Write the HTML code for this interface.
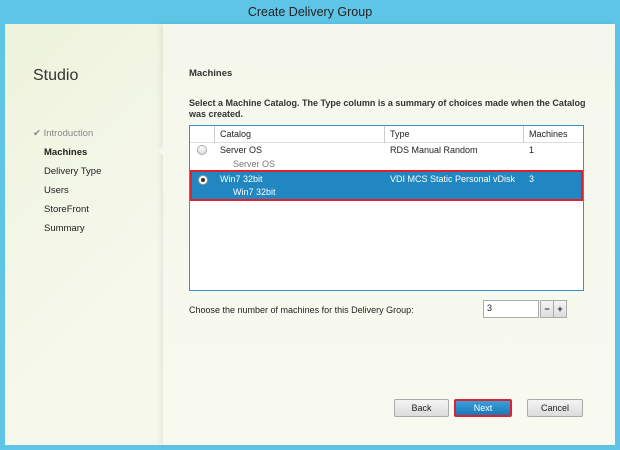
<!DOCTYPE html>
<html><head><style>
*{margin:0;padding:0;box-sizing:border-box}
body{width:620px;height:450px;overflow:hidden;background:#5ec5e6;font-family:"Liberation Sans",sans-serif;font-size:9px;color:#222;position:relative}
.title{position:absolute;left:0;top:0;width:620px;height:24px;text-align:center;line-height:25px;font-size:12.5px;color:#222}
.win{position:absolute;left:5px;top:24px;width:610px;height:421px;background:linear-gradient(135deg,#eef3dc,#f6f8ec 40%,#f2f6e2)}
.panel{position:absolute;left:163px;top:24px;width:452px;height:421px;background:linear-gradient(180deg,#f5f7ec,#f8faf0);box-shadow:-2px 0 5px rgba(0,0,0,.08)}
.a{position:absolute;white-space:nowrap}
.nav{left:44px;font-size:9.5px;color:#222}
.tbl{position:absolute;left:189px;top:125px;width:395px;height:166px;border:1px solid #3a8fc8;background:#fff}
.hdr{position:absolute;left:0;top:0;width:393px;height:17px;border-bottom:1px solid #ddd;background:#fff}
.vl{position:absolute;top:0;width:1px;height:17px;background:#ccc}
.sel{position:absolute;left:0;top:44px;width:393px;height:31px;background:#2087c0;border:2px solid #e02030}
.btn{position:absolute;top:399px;height:18px;border:1px solid #aaa;border-radius:2px;background:linear-gradient(#f4f4f4,#dcdcdc);text-align:center;line-height:16px;font-size:9px}
</style></head><body>
<div class="title">Create Delivery Group</div>
<div class="win"></div>
<div class="panel"></div>
<div class="a" style="left:33px;top:67px;font-size:16px;color:#333">Studio</div>
<div class="a nav" style="left:33px;top:128px;color:#888">✔ Introduction</div>
<div class="a nav" style="top:147px;font-weight:bold">Machines</div>
<div class="a nav" style="top:166px">Delivery Type</div>
<div class="a nav" style="top:185px">Users</div>
<div class="a nav" style="top:204px">StoreFront</div>
<div class="a nav" style="top:223px">Summary</div>
<div class="a" style="left:158px;top:146px;width:0;height:0;border-top:5px solid transparent;border-bottom:5px solid transparent;border-right:5px solid #f5f7ec"></div>
<div class="a" style="left:189px;top:68px;font-weight:bold;color:#333;font-size:9.5px">Machines</div>
<div class="a" style="left:189px;top:98px;font-weight:bold;color:#333;line-height:11px;white-space:normal;width:400px">Select a Machine Catalog. The Type column is a summary of choices made when the Catalog was created.</div>
<div class="tbl">
<div class="hdr">
<div class="vl" style="left:24px"></div><div class="vl" style="left:194px"></div><div class="vl" style="left:333px"></div>
<div class="a" style="left:30px;top:3px">Catalog</div>
<div class="a" style="left:200px;top:3px">Type</div>
<div class="a" style="left:339px;top:3px">Machines</div>
</div>
<div class="a" style="left:7px;top:19px;width:10px;height:10px;border-radius:50%;border:1px solid #aaa;background:linear-gradient(#fff,#ddd)"></div>
<div class="a" style="left:30px;top:19px">Server OS</div>
<div class="a" style="left:43px;top:33px;color:#777">Server OS</div>
<div class="a" style="left:200px;top:19px">RDS Manual Random</div>
<div class="a" style="left:339px;top:19px">1</div>
<div class="sel">
<div class="a" style="left:6px;top:3px;width:10px;height:10px;border-radius:50%;border:1px solid #999;background:#fff"><div style="margin:2px;width:4px;height:4px;border-radius:50%;background:#333"></div></div>
<div class="a" style="left:28px;top:2px;color:#fff">Win7 32bit</div>
<div class="a" style="left:41px;top:15px;color:#fff">Win7 32bit</div>
<div class="a" style="left:198px;top:2px;color:#fff">VDI MCS Static Personal vDisk</div>
<div class="a" style="left:337px;top:2px;color:#fff">3</div>
</div>
</div>
<div class="a" style="left:189px;top:305px">Choose the number of machines for this Delivery Group:</div>
<div class="a" style="left:483px;top:300px;width:56px;height:18px;border:1px solid #aaa;background:#fff;padding:2px 3px">3</div>
<div class="a" style="left:540px;top:300px;width:14px;height:18px;border:1px solid #aaa;background:linear-gradient(#f4f4f4,#ddd);text-align:center;font-weight:bold;line-height:16px">−</div>
<div class="a" style="left:553px;top:300px;width:14px;height:18px;border:1px solid #aaa;background:linear-gradient(#f4f4f4,#ddd);text-align:center;font-weight:bold;line-height:16px">+</div>
<div class="btn" style="left:394px;width:55px">Back</div>
<div class="btn" style="left:454px;width:58px;border:2px solid #e02030;background:linear-gradient(#3aa0d8,#1a78b8);color:#fff;line-height:14px">Next</div>
<div class="btn" style="left:527px;width:56px">Cancel</div>
</body></html>
